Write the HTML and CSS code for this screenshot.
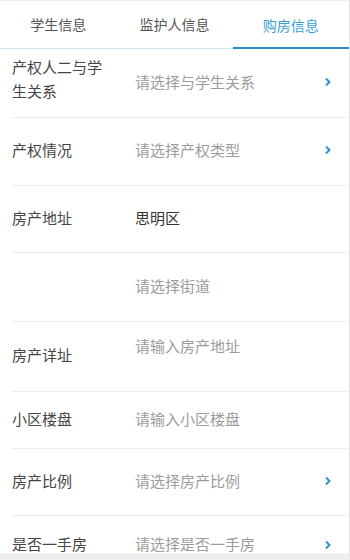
FILE: index.html
```html
<!DOCTYPE html>
<html lang="zh">
<head>
<meta charset="utf-8">
<title>购房信息</title>
<link rel="stylesheet" href="styles.css">
</head>
<body>
<div class="page">
  <nav class="tabs">
    <div class="tab">学生信息</div>
    <div class="tab">监护人信息</div>
    <div class="tab active">购房信息</div>
  </nav>
  <div class="form">
    <div class="row h69">
      <div class="label raised">产权人二与学生关系</div>
      <div class="value hint">请选择与学生关系</div>
      <svg class="chev" width="8" height="10" viewBox="0 0 8 10"><polyline points="2,1.5 5.5,5 2,8.5" fill="none" stroke="#2f93c9" stroke-width="2"/></svg>
    </div>
    <div class="row h68">
      <div class="label">产权情况</div>
      <div class="value hint">请选择产权类型</div>
      <svg class="chev" width="8" height="10" viewBox="0 0 8 10"><polyline points="2,1.5 5.5,5 2,8.5" fill="none" stroke="#2f93c9" stroke-width="2"/></svg>
    </div>
    <div class="row h67">
      <div class="label">房产地址</div>
      <div class="value filled">思明区</div>
    </div>
    <div class="row h69">
      <div class="label"></div>
      <div class="value hint">请选择街道</div>
    </div>
    <div class="row h70">
      <div class="label">房产详址</div>
      <div class="value hint top">请输入房产地址</div>
    </div>
    <div class="row h57">
      <div class="label">小区楼盘</div>
      <div class="value hint">请输入小区楼盘</div>
    </div>
    <div class="row h67">
      <div class="label">房产比例</div>
      <div class="value hint">请选择房产比例</div>
      <svg class="chev" width="8" height="10" viewBox="0 0 8 10"><polyline points="2,1.5 5.5,5 2,8.5" fill="none" stroke="#2f93c9" stroke-width="2"/></svg>
    </div>
    <div class="row last">
      <div class="label">是否一手房</div>
      <div class="value hint">请选择是否一手房</div>
      <svg class="chev" width="8" height="10" viewBox="0 0 8 10"><polyline points="2,1.5 5.5,5 2,8.5" fill="none" stroke="#2f93c9" stroke-width="2"/></svg>
    </div>
  </div>
  <div class="footer"></div>
</div>
</body>
</html>
```
FILE: styles.css
```css
html, body {
  margin: 0;
  padding: 0;
  background: #ffffff;
}
body {
  font-family: "Noto Sans CJK SC", "Liberation Sans", sans-serif;
  width: 350px;
  height: 560px;
  overflow: hidden;
}
.page {
  width: 349px;
  height: 560px;
  border-right: 1px solid #e6e6e6;
  display: flex;
  flex-direction: column;
  background: #fff;
}
.tabs {
  display: flex;
  border-top: 1px solid #ececec;
  border-bottom: 1px solid #cfe5f2;
  box-sizing: border-box;
  height: 49px;
  flex-shrink: 0;
}
.tab {
  flex: 1;
  display: flex;
  align-items: center;
  justify-content: center;
  font-size: 14px;
  color: #555;
  box-sizing: border-box;
  border-bottom: 2px solid transparent;
  padding-top: 1px;
}
.tab.active {
  color: #3aa0d8;
  border-bottom-color: #2a8dca;
  margin-bottom: -1px;
}
.form {
  flex: 1;
  display: flex;
  flex-direction: column;
}
.row {
  display: flex;
  align-items: center;
  margin-left: 12px;
  border-bottom: 1px solid #ededed;
  box-sizing: border-box;
  flex-shrink: 0;
  padding-right: 17px;
  padding-bottom: 3px;
}
.h57 { height: 57px; }
.h67 { height: 67px; }
.h68 { height: 68px; }
.h69 { height: 69px; }
.h70 { height: 70px; }
.row.last {
  flex: 1 1 0;
  border-bottom: none;
  align-items: flex-start;
  padding-top: 20px;
  padding-bottom: 0;
}
.row.last .label,
.row.last .value {
  line-height: 16px;
}
.row.last .chev {
  margin-top: 4px;
}
.label {
  width: 96px;
  margin-right: 27px;
  font-size: 15px;
  line-height: 24px;
  color: #464646;
  flex-shrink: 0;
}
.label.raised {
  margin-bottom: 6px;
}
.value {
  flex: 1;
  font-size: 15px;
  line-height: 24px;
}
.hint { color: #9c9c9c; }
.filled { color: #333; }
.top {
  align-self: flex-start;
  padding-top: 12px;
}
.chev {
  display: block;
  flex-shrink: 0;
}
.footer {
  height: 7px;
  background: #eeeeee;
  flex-shrink: 0;
}
```
